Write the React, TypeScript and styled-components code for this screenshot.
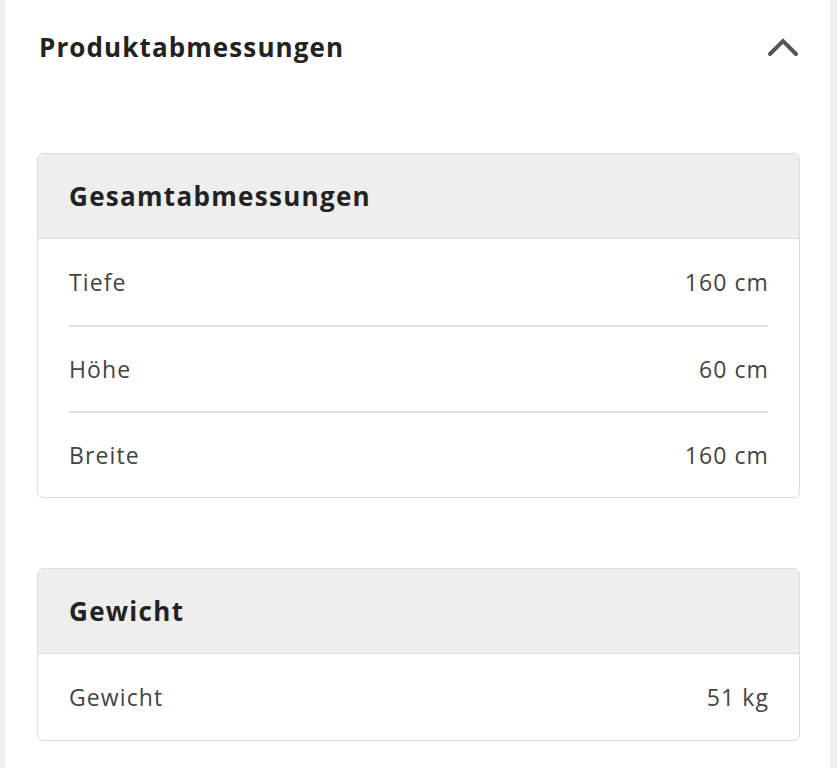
import React from 'react';
import styled, { createGlobalStyle } from 'styled-components';

const GlobalStyle = createGlobalStyle`
  body {
    margin: 0;
    background: #fff;
    font-family: "Open Sans", "Noto Sans", "Liberation Sans", sans-serif;
    color: #222;
  }
`;

interface SpecRow {
  label: string;
  value: string;
}

interface SpecGroup {
  title: string;
  rows: SpecRow[];
}

const groups: SpecGroup[] = [
  {
    title: 'Gesamtabmessungen',
    rows: [
      { label: 'Tiefe', value: '160 cm' },
      { label: 'Höhe', value: '60 cm' },
      { label: 'Breite', value: '160 cm' },
    ],
  },
  {
    title: 'Gewicht',
    rows: [{ label: 'Gewicht', value: '51 kg' }],
  },
];

export default function App() {
  return (
    <Page>
      <GlobalStyle />
      <Section>
        <SectionHeader>
          <SectionTitle>Produktabmessungen</SectionTitle>
          <Chevron viewBox="0 0 32 20" aria-hidden>
            <polyline points="3,17 16,4 29,17" />
          </Chevron>
        </SectionHeader>
        <Cards>
          {groups.map(group => (
            <Card key={group.title}>
              <CardHeader>{group.title}</CardHeader>
              <Rows>
                {group.rows.map(row => (
                  <Row key={row.label}>
                    <Label>{row.label}</Label>
                    <Value>{row.value}</Value>
                  </Row>
                ))}
              </Rows>
            </Card>
          ))}
        </Cards>
      </Section>
    </Page>
  );
}

const Page = styled.div`
  min-height: 768px;
  box-sizing: border-box;
  border-left: 5px solid #efefef;
  border-right: 7px solid #efefef;
  background: #fff;
`;

const Section = styled.section`
  padding: 0 30px 0 32px;
`;

const SectionHeader = styled.div`
  height: 94px;
  display: flex;
  align-items: center;
  justify-content: space-between;
  padding: 0 1px 0 2px;
`;

const SectionTitle = styled.h2`
  margin: 0;
  font-size: 26px;
  font-weight: 700;
  letter-spacing: 1.1px;
  color: #222;
`;

const Chevron = styled.svg`
  width: 32px;
  height: 20px;
  fill: none;
  stroke: #555;
  stroke-width: 4;
  stroke-linecap: round;
  stroke-linejoin: miter;
`;

const Cards = styled.div`
  margin-top: 59px;
  display: flex;
  flex-direction: column;
  gap: 70px;
`;

const Card = styled.div`
  border: 1.5px solid #dcdcdc;
  border-radius: 6px;
  overflow: hidden;
  background: #fff;
`;

const CardHeader = styled.div`
  height: 85px;
  box-sizing: border-box;
  display: flex;
  align-items: center;
  padding: 0 31px;
  background: #eeeeef;
  border-bottom: 1.5px solid #dcdcdc;
  font-size: 26px;
  font-weight: 700;
  letter-spacing: 1.3px;
  color: #222;
`;

const Rows = styled.div`
  padding: 0 31px;
`;

const Row = styled.div`
  height: 86px;
  box-sizing: border-box;
  display: flex;
  align-items: center;
  justify-content: space-between;
  font-size: 23px;
  letter-spacing: 1.1px;
  color: #444;

  & + & {
    border-top: 2px solid #e2e2e2;
  }
`;

const Label = styled.span``;

const Value = styled.span`
  margin-right: -1px;
`;
